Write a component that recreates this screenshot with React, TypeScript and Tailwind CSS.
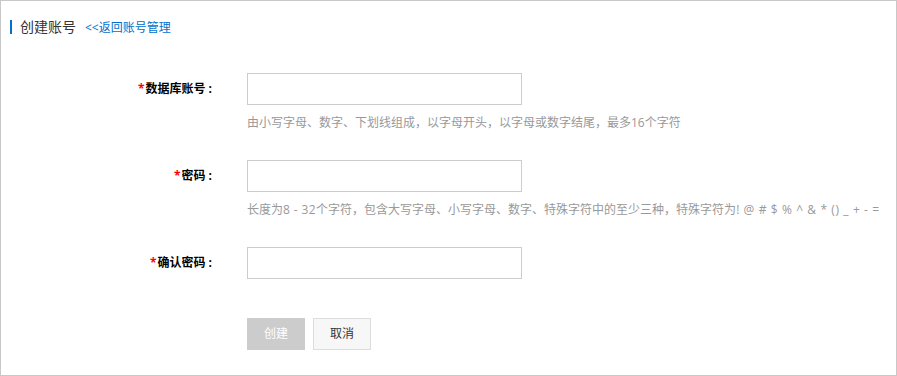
const font = { fontFamily: '"Open Sans", "Noto Sans CJK SC", sans-serif' };

type Field = { label: string; hint?: React.ReactNode };

const fields: Field[] = [
  { label: '数据库账号', hint: '由小写字母、数字、下划线组成，以字母开头，以字母或数字结尾，最多16个字符' },
  {
    label: '密码',
    hint: (
      <>
        长度为<span className="tracking-[0.4px]">8 - 32</span>个字符，包含大写字母、小写字母、数字、特殊字符中的至少三种，特殊字符为
        <span className="tracking-[0.6px]">! @ # $ % ^ &amp; * () _ + - =</span>
      </>
    ),
  },
  { label: '确认密码' },
];

export default function App() {
  return (
    <div className="w-[897px] h-[376px] border border-[#c8c8c8] bg-white overflow-hidden" style={font}>
      {/* Header */}
      <div className="flex items-center h-[14px] mt-[19px] ml-[9px]">
        <div className="w-[2px] h-[14px] bg-[#0070cc]" />
        <span className="ml-[8px] text-[14px] leading-[14px] text-[#333]">创建账号</span>
        <a href="#" className="ml-[9px] text-[12px] leading-[14px] text-[#0070cc] mt-[2px]">
          &lt;&lt;返回账号管理
        </a>
      </div>

      {/* Form */}
      <div className="mt-[39px]">
        {fields.map((f, i) => (
          <div key={f.label} className={`flex ${i === 0 ? '' : 'mt-[28px]'}`}>
            <div className="w-[211px] h-[32px] flex items-center justify-end text-[12px] font-bold text-[#000]">
              <span className="text-[#f00] mr-[1px]">*</span>
              {f.label}
              <span className="ml-[3px]">:</span>
            </div>
            <div className="ml-[35px]">
              <input className="block w-[275px] h-[32px] border border-[#ccc] outline-none px-2 text-[12px]" />
              {f.hint && (
                <div className="mt-[9px] text-[12px] leading-[18px] text-[#999] whitespace-nowrap">{f.hint}</div>
              )}
            </div>
          </div>
        ))}

        <div className="flex mt-[39px] ml-[246px]">
          <button className="w-[58px] h-[32px] bg-[#ccc] text-white text-[12px]">创建</button>
          <button className="ml-[8px] w-[58px] h-[32px] bg-[#f7f7f7] border border-[#ddd] text-[#333] text-[12px]">取消</button>
        </div>
      </div>
    </div>
  );
}
